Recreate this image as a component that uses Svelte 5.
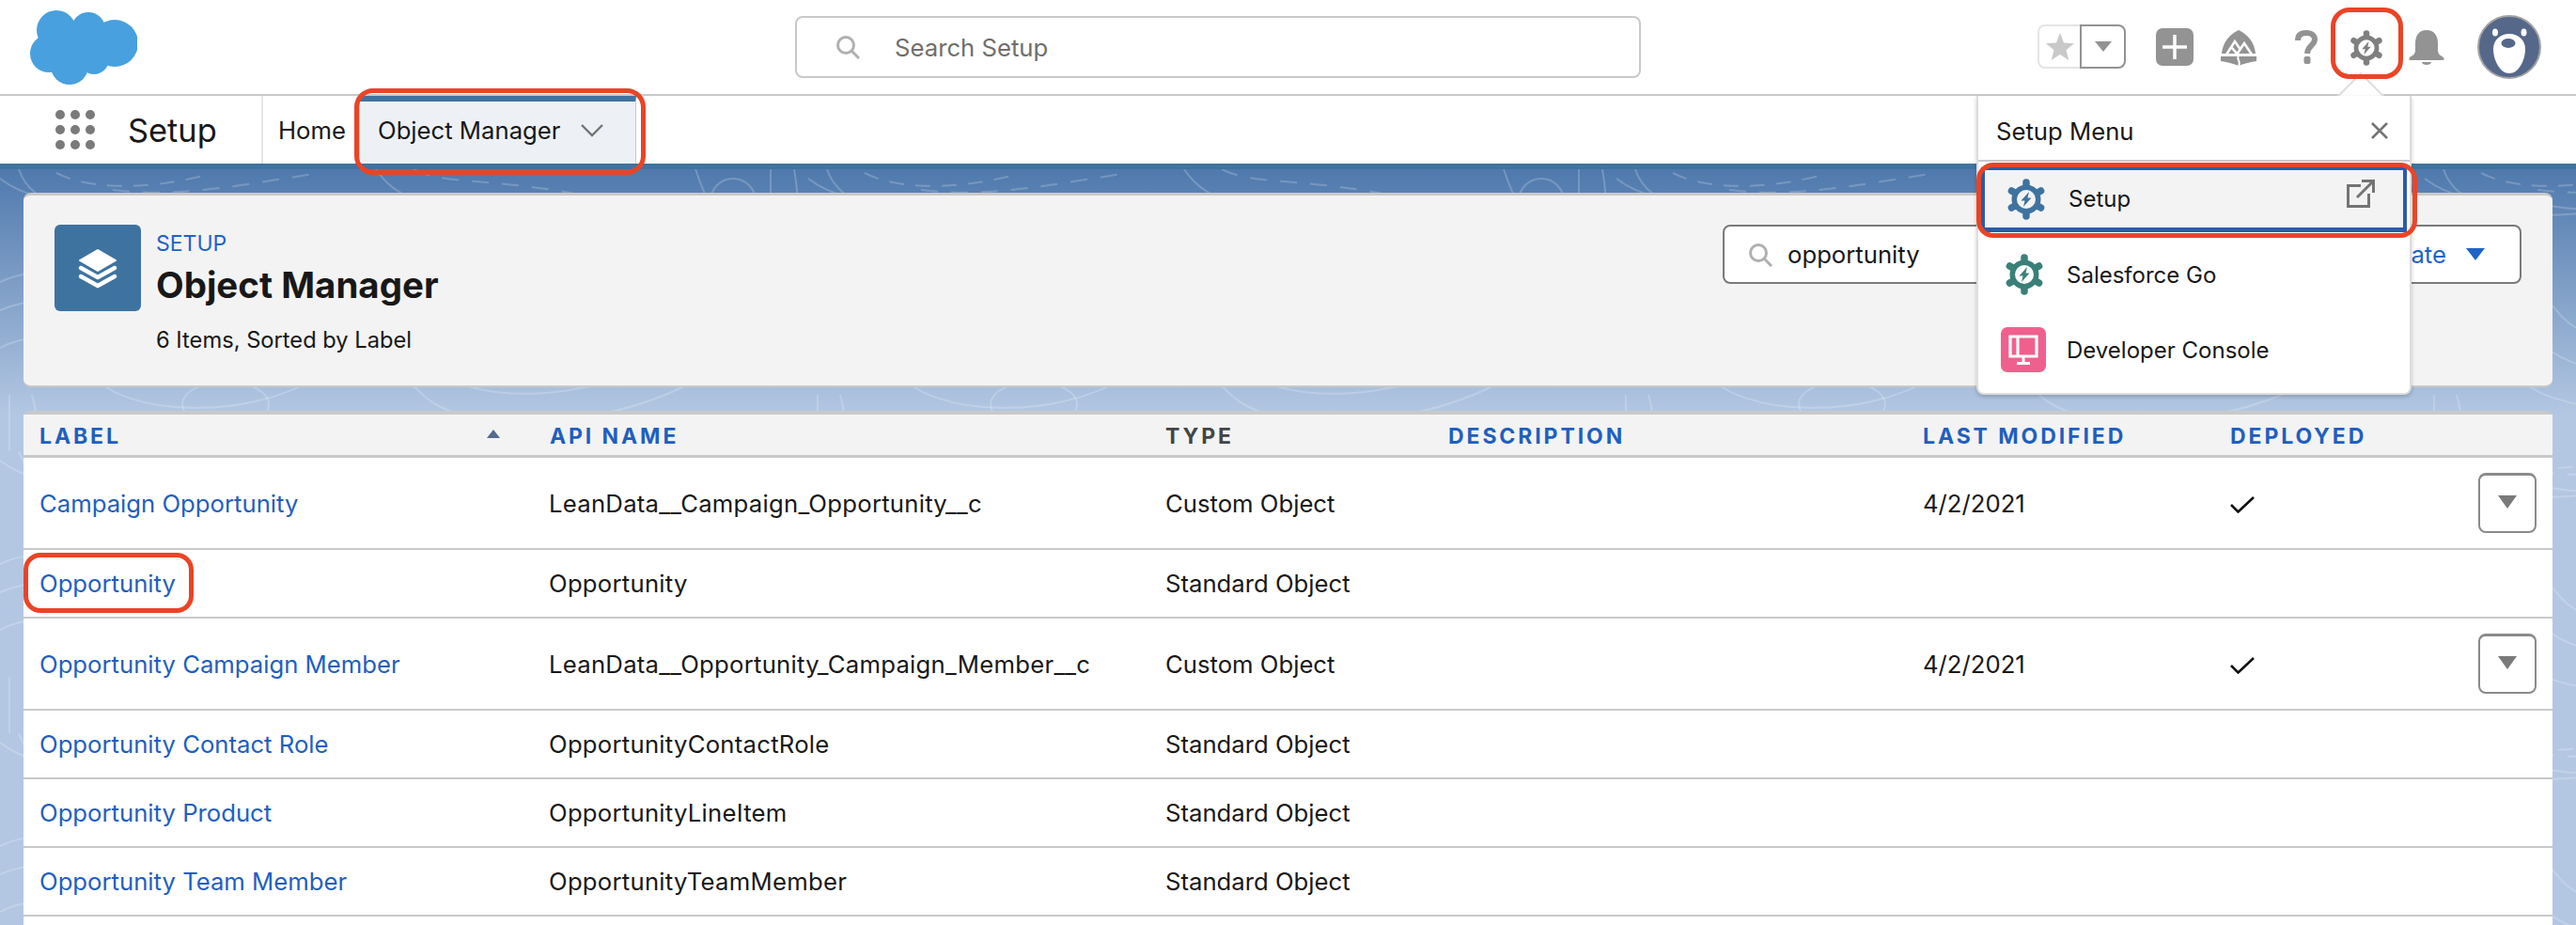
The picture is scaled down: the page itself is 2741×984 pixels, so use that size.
<script>
  const rows = [
    { label: 'Campaign Opportunity', api: 'LeanData__Campaign_Opportunity__c', type: 'Custom Object', modified: '4/2/2021', deployed: true },
    { label: 'Opportunity', api: 'Opportunity', type: 'Standard Object' },
    { label: 'Opportunity Campaign Member', api: 'LeanData__Opportunity_Campaign_Member__c', type: 'Custom Object', modified: '4/2/2021', deployed: true },
    { label: 'Opportunity Contact Role', api: 'OpportunityContactRole', type: 'Standard Object' },
    { label: 'Opportunity Product', api: 'OpportunityLineItem', type: 'Standard Object' },
    { label: 'Opportunity Team Member', api: 'OpportunityTeamMember', type: 'Standard Object' }
  ];

  const columns = ['Label', 'API Name', 'Type', 'Description', 'Last Modified', 'Deployed'];
  const teeth = [0, 60, 120, 180, 240, 300];
  const dots = Array(9).fill(0);
</script>

{#snippet gear(color, size)}
  <svg class="gear" viewBox="-22 -22 44 44" width={size} height={size}>
    <circle r="12.75" fill="none" stroke={color} stroke-width="5.5" />
    {#each teeth as angle}
      <line y1="-15" y2="-18" stroke={color} stroke-width="7.5" stroke-linecap="round" transform="rotate({angle})" />
    {/each}
    <path d="M3 -8 L-5.5 1.5 H-1.5 L-3 8 L5.5 -1.5 H1.5 Z" fill={color} />
  </svg>
{/snippet}

{#snippet search(color)}
  <svg viewBox="0 0 26 26" width="26" height="26" fill="none" stroke={color}>
    <circle cx="11" cy="11" r="8.5" stroke-width="3" />
    <line x1="17" y1="17" x2="25" y2="25" stroke-width="3" />
  </svg>
{/snippet}

<div class="page">
  <svg class="contours" width="2741" height="804">
    <defs>
      <pattern id="topo" width="860" height="300" patternUnits="userSpaceOnUse">
        <g fill="none" stroke="#fff" stroke-opacity="0.2" stroke-width="2">
          <path d="M0 10 C40 40 80 30 140 40 C200 50 260 24 320 26 C360 28 380 60 420 70" />
          <path d="M20 0 C30 30 60 42 110 48 C170 54 240 30 300 36 C340 40 370 60 410 80" />
          <path d="M60 4 C90 20 150 24 220 6" stroke-dasharray="16 12" />
          <path d="M120 22 C180 30 240 20 340 4" stroke-dasharray="18 14" />
          <path d="M400 0 C420 30 450 40 500 36 C560 30 620 60 680 70" />
          <path d="M440 0 C470 16 520 10 600 24 C640 30 690 50 720 70" stroke-dasharray="18 14" />
          <circle cx="780" cy="34" r="24" />
          <path d="M740 0 C750 30 760 50 780 70" />
          <path d="M820 0 V70 M845 0 C850 30 850 50 845 70" />
          <path d="M0 120 C40 100 110 110 140 150 C170 190 240 190 300 160 C360 130 420 140 470 180 C520 220 610 220 700 170 C770 140 820 130 860 150" />
          <path d="M0 150 C50 130 90 140 120 180 C150 220 250 230 320 190 C370 160 420 170 460 210 C500 250 620 250 710 200 C780 170 820 160 860 180" />
          <path d="M0 190 C40 170 70 180 100 220 C130 260 260 270 340 220 C380 200 420 210 450 240 C490 280 630 280 730 230 C790 200 830 195 860 210" />
          <ellipse cx="240" cy="250" rx="46" ry="24" />
          <ellipse cx="620" cy="120" rx="60" ry="26" />
          <path d="M10 240 V300 M34 240 C40 260 40 280 34 300" />
          <path d="M540 260 C580 250 620 270 640 300" stroke-dasharray="16 12" />
        </g>
      </pattern>
    </defs>
    <rect width="2741" height="804" fill="url(#topo)" />
  </svg>

  <header class="topbar">
    <svg class="logo" viewBox="0 0 114 80" width="114" height="80">
      <g fill="#48a0de">
        <circle cx="28" cy="22" r="21" />
        <circle cx="62" cy="21" r="18" />
        <circle cx="90" cy="36" r="25" />
        <circle cx="68" cy="53" r="16" />
        <circle cx="42" cy="60" r="20" />
        <circle cx="20" cy="47" r="20" />
        <rect x="24" y="20" width="60" height="34" />
      </g>
    </svg>

    <div class="global-search">
      {@render search('#b0b0b0')}
      <span>Search Setup</span>
    </div>

    <div class="header-actions">
      <div class="favorites">
        <span class="fav-star">
          <svg viewBox="0 0 30 30" width="30" height="30"><path d="M15 0 L19 10.5 L30 11.2 L21.5 18.2 L24.3 29 L15 23 L5.7 29 L8.5 18.2 L0 11.2 L11 10.5 Z" fill="#c9c9c9" /></svg>
        </span>
        <span class="fav-menu">
          <svg viewBox="0 0 18 11" width="18" height="11"><path d="M0 0 H18 L9 11 Z" fill="#939393" /></svg>
        </span>
      </div>
      <span class="plus">
        <svg viewBox="0 0 40 40" width="40" height="40">
          <rect width="40" height="40" rx="7" fill="#939393" />
          <path d="M20 7 V33 M7 20 H33" stroke="#fff" stroke-width="3.5" />
        </svg>
      </span>
      <svg class="trail" viewBox="0 0 38 38" width="38" height="38">
        <path d="M1 25 C2 13 10 4 19 0 C28 4 36 13 37 25 Z" fill="#939393" />
        <path d="M6 26 L15 12 L21 21 M17 26 L25 14 L33 26 M12 19 L18 26" fill="none" stroke="#fff" stroke-width="2.6" />
        <path d="M0 28 H38 V33 C30 34 24 36 19 38 C14 36 8 34 0 33 Z" fill="#939393" />
        <path d="M19 28 C16 31 22 33 19 38" fill="none" stroke="#fff" stroke-width="2" />
      </svg>
      <svg class="help" viewBox="0 0 24 36" width="24" height="36">
        <path d="M3 11 C3 5 7 3 12 3 C18 3 21 6 21 10 C21 16 13.5 16.5 13 25" fill="none" stroke="#939393" stroke-width="6" />
        <rect x="9.5" y="28" width="7" height="8" rx="2" fill="#939393" />
      </svg>
      <span class="setup-gear">{@render gear('#7f7f7f', 38)}</span>
      <svg class="bell" viewBox="0 0 38 38" width="38" height="38">
        <path d="M19 0 C27 0 31 6 31 14 V21 C31 26 34 27 37 29 C38 30 38 32 36 32 H2 C0 32 0 30 1 29 C4 27 7 26 7 21 V14 C7 6 11 0 19 0 Z" fill="#939393" />
        <path d="M14 34 H24 C24 38 14 38 14 34 Z" fill="#939393" />
      </svg>
      <svg class="avatar" viewBox="0 0 68 68" width="68" height="68">
        <circle cx="34" cy="34" r="33" fill="#56688a" stroke="#a3a3a3" stroke-width="2" />
        <path d="M34 20 C44 20 51 27 51 36 C51 48 44 62 34 62 C24 62 17 48 17 36 C17 27 24 20 34 20 Z" fill="#fff" />
        <ellipse cx="33" cy="30" rx="7.5" ry="5" fill="#56688a" />
        <ellipse cx="19" cy="18.5" rx="3" ry="4" fill="#fff" />
        <ellipse cx="49.5" cy="18.5" rx="3" ry="4" fill="#fff" />
      </svg>
    </div>
  </header>

  <nav class="navbar">
    <div class="waffle">
      {#each dots as _}<i></i>{/each}
    </div>
    <span class="app-name">Setup</span>
    <a class="nav-link" href="#home">Home</a>
    <div class="nav-tab">
      <span>Object Manager</span>
      <svg viewBox="0 0 24 14" width="24" height="14"><path d="M1 1 L12 12 L23 1" fill="none" stroke="#747474" stroke-width="2.4" /></svg>
    </div>
  </nav>

  <main class="content">
    <section class="card">
      <div class="object-icon">
        <svg viewBox="0 0 92 92" width="92" height="92">
          <path d="M46 27 L65 38 L46 49 L27 38 Z" fill="#fff" stroke="#fff" stroke-width="2" stroke-linejoin="round" />
          <path d="M28 46 L46 56 L64 46 M28 55 L46 65 L64 55" fill="none" stroke="#fff" stroke-width="4.5" stroke-linecap="round" stroke-linejoin="round" />
        </svg>
      </div>
      <div class="titles">
        <div class="eyebrow">SETUP</div>
        <h1>Object Manager</h1>
        <div class="summary">6 Items, Sorted by Label</div>
      </div>
      <div class="card-actions">
        <div class="quick-find">
          {@render search('#b0b0b0')}
          <span>opportunity</span>
        </div>
        <button class="create">
          Create
          <svg viewBox="0 0 20 13" width="20" height="13"><path d="M0 0 H20 L10 13 Z" fill="#1f63c6" /></svg>
        </button>
      </div>
    </section>

    <section class="table">
      <div class="row head">
        {#each columns as column, i}
          <div class="th" class:muted={column === 'Type'}>
            {column}
            {#if i === 0}
              <svg class="sort" viewBox="0 0 14 9" width="14" height="9"><path d="M7 0 L14 9 H0 Z" fill="#54698d" /></svg>
            {/if}
          </div>
        {/each}
      </div>
      {#each rows as row}
        <div class="row" class:tall={row.deployed}>
          <a class="link" href="#object">{row.label}</a>
          <div class="api">{row.api}</div>
          <div>{row.type}</div>
          <div></div>
          <div>{row.modified ?? ''}</div>
          <div>
            {#if row.deployed}
              <svg class="check" viewBox="0 0 26 18" width="26" height="18"><path d="M1 9 L8.5 16.5 L25 1" fill="none" stroke="#111" stroke-width="2.6" /></svg>
            {/if}
          </div>
          <div class="row-action">
            {#if row.deployed}
              <button class="row-menu" aria-label="Show actions">
                <svg viewBox="0 0 20 14" width="20" height="14"><path d="M0 0 H20 L10 14 Z" fill="#7a7a7a" /></svg>
              </button>
            {/if}
          </div>
        </div>
      {/each}
    </section>
  </main>

  <div class="popover-tip"></div>
  <aside class="popover">
    <div class="pop-head">
      <span>Setup Menu</span>
      <svg viewBox="0 0 18 18" width="18" height="18"><path d="M1 1 L17 17 M17 1 L1 17" stroke="#747474" stroke-width="2.6" /></svg>
    </div>
    <div class="pop-item active">
      {@render gear('#3f739f', 44)}
      <span class="pop-text">Setup</span>
      <svg class="external" viewBox="0 0 30 30" width="30" height="30" fill="none" stroke="#747474" stroke-width="3">
        <path d="M15 6.5 H1.5 V28.5 H23.5 V15" />
        <path d="M11 19 L28 2 M16 1.5 H28.5 V14" />
      </svg>
    </div>
    <div class="pop-item">
      {@render gear('#3a8078', 44)}
      <span class="pop-text">Salesforce Go</span>
    </div>
    <div class="pop-item">
      <svg class="console" viewBox="0 0 48 48" width="48" height="48">
        <rect width="48" height="48" rx="7" fill="#f0608e" />
        <path d="M10 10 H38 V31 H10 Z M18 10 V31" fill="none" stroke="#fff" stroke-width="3.2" />
        <path d="M22.5 32 H25.5 V37 H31 V40 H17 V37 H22.5 Z" fill="#fff" />
      </svg>
      <span class="pop-text">Developer Console</span>
    </div>
  </aside>

  <div class="callout tab-mark"></div>
  <div class="callout gear-mark"></div>
  <div class="callout setup-mark"></div>
  <div class="callout row-mark"></div>
</div>

<style>
  :global(body) {
    margin: 0;
    background: #fff;
  }

  .page {
    position: relative;
    width: 2741px;
    height: 984px;
    overflow: hidden;
    font-family: Inter, "Liberation Sans", sans-serif;
    font-size: 25.7px;
    color: #181818;
    background: linear-gradient(#4f79ad 180px, #b3c7e2 440px);
  }

  .contours {
    position: absolute;
    left: 0;
    top: 180px;
  }

  .topbar {
    position: relative;
    height: 100px;
    background: #fff;
    border-bottom: 2px solid #c9c9c9;
  }

  .logo {
    position: absolute;
    left: 32px;
    top: 10px;
  }

  .global-search {
    position: absolute;
    left: 846px;
    top: 17px;
    width: 855px;
    height: 62px;
    display: flex;
    align-items: center;
    gap: 37px;
    padding-left: 41px;
    border: 2px solid #c9c9c9;
    border-radius: 8px;
    color: #706e6b;
  }

  .header-actions {
    position: absolute;
    left: 2168px;
    top: 0;
    height: 100px;
    width: 536px;
  }

  .header-actions > * {
    position: absolute;
  }

  .favorites {
    left: 0;
    top: 26px;
    display: flex;
    height: 47px;
  }

  .fav-star {
    width: 45px;
    box-sizing: border-box;
    display: flex;
    align-items: center;
    justify-content: center;
    border: 2px solid #e5e5e5;
    border-right: none;
    border-radius: 8px 0 0 8px;
  }

  .fav-menu {
    width: 49px;
    box-sizing: border-box;
    display: flex;
    align-items: center;
    justify-content: center;
    border: 2px solid #939393;
    border-radius: 0 8px 8px 0;
  }

  .plus {
    left: 126px;
    top: 30px;
    line-height: 0;
  }

  .trail {
    left: 195px;
    top: 32px;
  }

  .help {
    left: 274px;
    top: 32px;
  }

  .setup-gear {
    left: 331px;
    top: 32px;
    line-height: 0;
  }

  .bell {
    left: 395px;
    top: 32px;
  }

  .avatar {
    left: 468px;
    top: 16px;
  }

  .navbar {
    position: relative;
    height: 72px;
    background: #fff;
    display: flex;
    align-items: center;
  }

  .waffle {
    margin-left: 59px;
    width: 42px;
    display: grid;
    grid-template-columns: repeat(3, 10px);
    gap: 6px;
  }

  .waffle i {
    width: 10px;
    height: 10px;
    border-radius: 50%;
    background: #7a7a7a;
  }

  .app-name {
    margin-left: 35px;
    width: 142px;
    height: 72px;
    line-height: 74px;
    font-size: 34.4px;
    border-right: 2px solid #e5e5e5;
  }

  .nav-link {
    margin-left: 16px;
    width: 86px;
    color: #181818;
    text-decoration: none;
  }

  .nav-tab {
    width: 295px;
    height: 72px;
    box-sizing: border-box;
    padding: 0 0 5px 19px;
    display: flex;
    align-items: center;
    gap: 21px;
    background: #edf1f5;
    border-top: 6px solid #3f739f;
    border-left: 1px solid #c9c9c9;
    border-right: 1px solid #c9c9c9;
  }

  .content {
    position: relative;
    border-top: 6px solid #3f739f;
    padding: 25px 25px 0;
  }

  .card {
    height: 207px;
    box-sizing: border-box;
    display: flex;
    padding: 31px 33px 0;
    background: #f3f3f3;
    border-top: 3px solid #c9c9c9;
    border-bottom: 2px solid #c9c9c9;
    border-radius: 8px;
  }

  .object-icon {
    width: 92px;
    height: 92px;
    background: #3f739f;
    border-radius: 6px;
    line-height: 0;
  }

  .titles {
    margin-left: 16px;
  }

  .eyebrow {
    color: #1f63c6;
    font-size: 23px;
    line-height: 28px;
    margin-top: 6px;
  }

  h1 {
    margin: 0;
    font-size: 38.5px;
    line-height: 46px;
    font-weight: 700;
    margin-top: 7px;
  }

  .summary {
    font-size: 23.7px;
    line-height: 30px;
    margin-top: 21px;
  }

  .card-actions {
    margin-left: auto;
    display: flex;
    gap: 150px;
    height: 63px;
  }

  .quick-find {
    width: 500px;
    box-sizing: border-box;
    display: flex;
    align-items: center;
    gap: 16px;
    padding-left: 25px;
    background: #fff;
    border: 2px solid #7a7a7a;
    border-radius: 8px;
  }

  .create {
    width: 200px;
    box-sizing: border-box;
    display: flex;
    align-items: center;
    justify-content: flex-end;
    gap: 21px;
    padding: 0 37px 0 0;
    font: inherit;
    color: #1f63c6;
    background: #fff;
    border: 2px solid #7a7a7a;
    border-radius: 8px;
  }

  .table {
    height: 600px;
    margin-top: 25px;
    background: #fff;
    border-top: 4px solid #c9c9c9;
    border-radius: 8px 8px 0 0;
  }

  .row {
    display: grid;
    grid-template-columns: 543px 655px 301px 505px 327px 250px 1fr;
    align-items: center;
    padding-left: 17px;
    height: 73px;
    box-sizing: border-box;
    border-bottom: 2px solid #c9c9c9;
    background: #fff;
  }

  .row.tall {
    height: 98px;
  }

  .row.head {
    height: 46px;
    padding-top: 2px;
    background: #f3f3f3;
    border-bottom: 3px solid #c9c9c9;
  }

  .th {
    position: relative;
    color: #1f5fbf;
    font-size: 23px;
    font-weight: 700;
    letter-spacing: 2.9px;
    text-transform: uppercase;
  }

  .th.muted {
    color: #444;
  }

  .sort {
    position: absolute;
    left: 476px;
    top: 7px;
  }

  .link {
    color: #1f5fbf;
    text-decoration: none;
  }

  .api {
    letter-spacing: 0.25px;
    margin-left: -1px;
  }

  .check {
    display: block;
    margin-top: 3px;
  }

  .row-action {
    position: relative;
    height: 100%;
  }

  .row-menu {
    position: absolute;
    left: 14px;
    top: 16px;
    width: 62px;
    height: 64px;
    padding: 0;
    background: #fff;
    border: 2px solid #8a8a8a;
    border-top-width: 3px;
    border-radius: 8px;
  }

  .popover-tip {
    position: absolute;
    left: 2492px;
    top: 85px;
    width: 36px;
    height: 36px;
    background: #fff;
    border: 2px solid #ddd;
    transform: rotate(45deg);
  }

  .popover {
    position: absolute;
    left: 2103px;
    top: 102px;
    width: 463px;
    height: 318px;
    box-sizing: border-box;
    background: #fff;
    border: 2px solid #ddd;
    border-top: none;
    border-radius: 0 0 8px 8px;
    box-shadow: 0 2px 4px rgba(0, 0, 0, 0.2);
  }

  .pop-head {
    height: 62px;
    display: flex;
    align-items: center;
    justify-content: space-between;
    padding: 6px 23px 0 19px;
    border-bottom: 2px solid #c9c9c9;
  }

  .pop-item {
    height: 80px;
    display: flex;
    align-items: center;
    padding-left: 27px;
    font-size: 24px;
  }

  .pop-item.active {
    height: 61px;
    margin: 6px 3px 5px;
    padding-left: 22px;
    background: #f3f3f3;
    border: solid #2a5ca8;
    border-width: 3px 4px 5px 4px;
  }

  .pop-text {
    margin-left: 23px;
  }

  .console {
    margin-left: -3px;
  }

  .console + .pop-text {
    margin-left: 22px;
  }

  .external {
    margin-left: auto;
    margin-right: 30px;
    margin-top: -12px;
  }

  .callout {
    position: absolute;
    box-sizing: border-box;
    border: 5px solid #ea4426;
    pointer-events: none;
  }

  .tab-mark {
    left: 377px;
    top: 94px;
    width: 310px;
    height: 92px;
    border-radius: 20px;
  }

  .gear-mark {
    left: 2480px;
    top: 8px;
    width: 77px;
    height: 76px;
    border-radius: 20px;
  }

  .setup-mark {
    left: 2103px;
    top: 173px;
    width: 469px;
    height: 80px;
    border-radius: 18px;
  }

  .row-mark {
    left: 25px;
    top: 588px;
    width: 181px;
    height: 64px;
    border-radius: 18px;
  }
</style>
